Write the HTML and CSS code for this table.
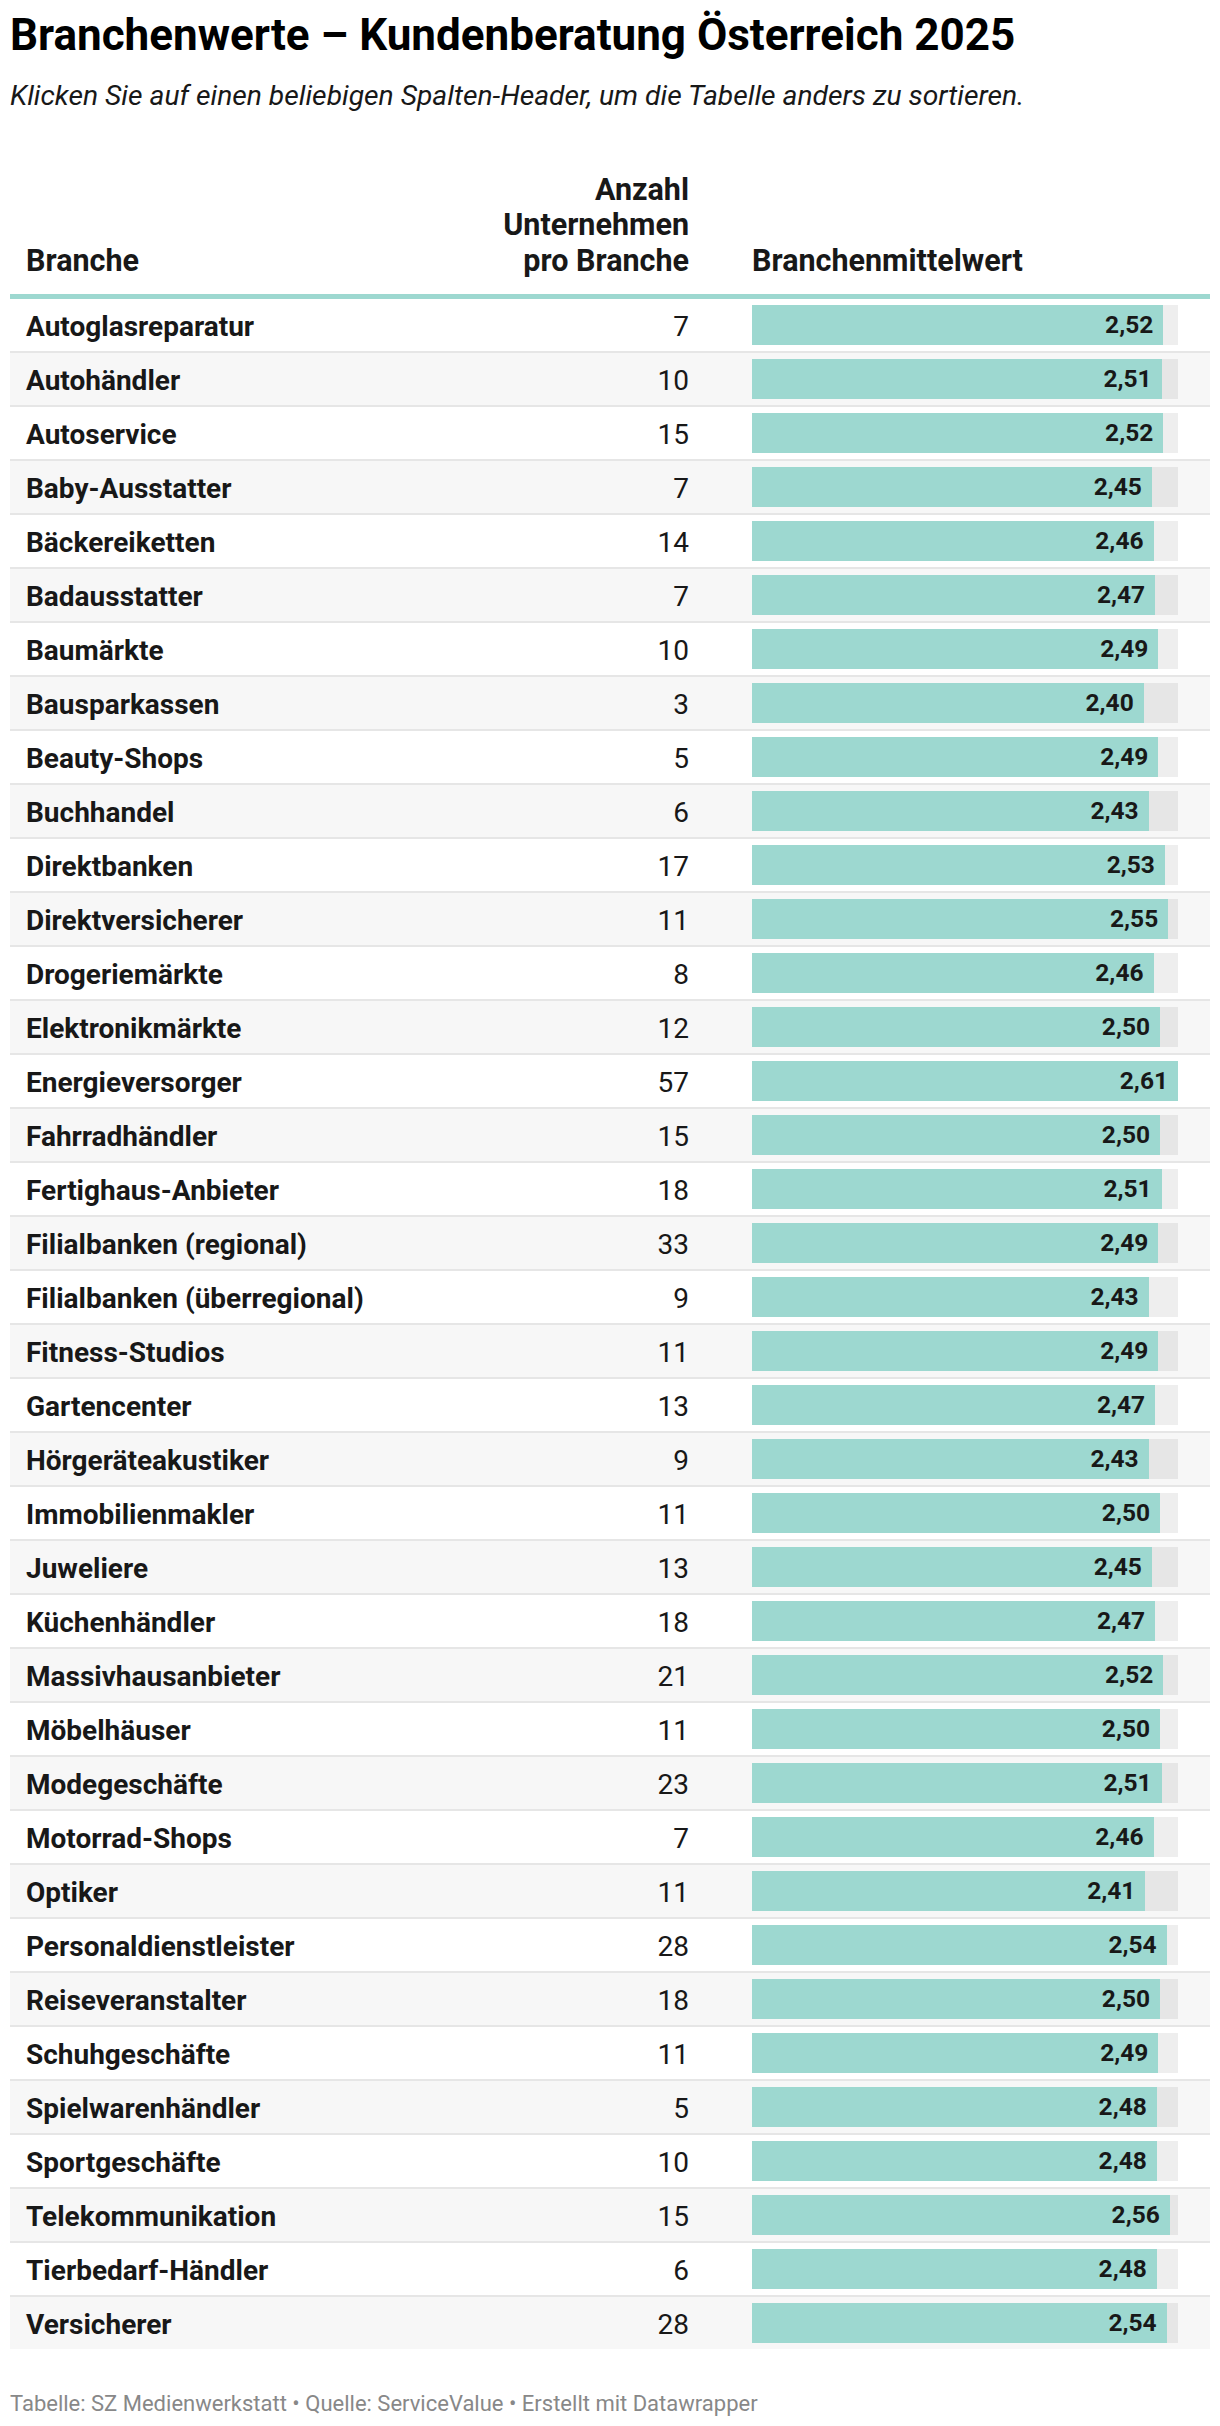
FILE: index.html
```html
<!DOCTYPE html>
<html lang="de">
<head>
<meta charset="utf-8">
<title>Branchenwerte – Kundenberatung Österreich 2025</title>
<link rel="stylesheet" href="styles.css">
</head>
<body>
<div class="chart">
  <h1 class="title">Branchenwerte – Kundenberatung Österreich 2025</h1>
  <p class="subtitle">Klicken Sie auf einen beliebigen Spalten-Header, um die Tabelle anders zu sortieren.</p>
  <table class="tbl">
    <colgroup>
      <col class="c-name">
      <col class="c-num">
      <col class="c-bar">
    </colgroup>
    <thead>
      <tr>
        <th class="h-name">Branche</th>
        <th class="h-num">Anzahl<br>Unternehmen<br>pro Branche</th>
        <th class="h-bar">Branchenmittelwert</th>
      </tr>
    </thead>
    <tbody>
      <tr><td class="name">Autoglasreparatur</td><td class="num">7</td><td class="barcell"><div class="track"><div class="bar" style="width:96.55%"><span class="val">2,52</span></div></div></td></tr>
      <tr><td class="name">Autohändler</td><td class="num">10</td><td class="barcell"><div class="track"><div class="bar" style="width:96.17%"><span class="val">2,51</span></div></div></td></tr>
      <tr><td class="name">Autoservice</td><td class="num">15</td><td class="barcell"><div class="track"><div class="bar" style="width:96.55%"><span class="val">2,52</span></div></div></td></tr>
      <tr><td class="name">Baby-Ausstatter</td><td class="num">7</td><td class="barcell"><div class="track"><div class="bar" style="width:93.87%"><span class="val">2,45</span></div></div></td></tr>
      <tr><td class="name">Bäckereiketten</td><td class="num">14</td><td class="barcell"><div class="track"><div class="bar" style="width:94.25%"><span class="val">2,46</span></div></div></td></tr>
      <tr><td class="name">Badausstatter</td><td class="num">7</td><td class="barcell"><div class="track"><div class="bar" style="width:94.64%"><span class="val">2,47</span></div></div></td></tr>
      <tr><td class="name">Baumärkte</td><td class="num">10</td><td class="barcell"><div class="track"><div class="bar" style="width:95.40%"><span class="val">2,49</span></div></div></td></tr>
      <tr><td class="name">Bausparkassen</td><td class="num">3</td><td class="barcell"><div class="track"><div class="bar" style="width:91.95%"><span class="val">2,40</span></div></div></td></tr>
      <tr><td class="name">Beauty-Shops</td><td class="num">5</td><td class="barcell"><div class="track"><div class="bar" style="width:95.40%"><span class="val">2,49</span></div></div></td></tr>
      <tr><td class="name">Buchhandel</td><td class="num">6</td><td class="barcell"><div class="track"><div class="bar" style="width:93.10%"><span class="val">2,43</span></div></div></td></tr>
      <tr><td class="name">Direktbanken</td><td class="num">17</td><td class="barcell"><div class="track"><div class="bar" style="width:96.93%"><span class="val">2,53</span></div></div></td></tr>
      <tr><td class="name">Direktversicherer</td><td class="num">11</td><td class="barcell"><div class="track"><div class="bar" style="width:97.70%"><span class="val">2,55</span></div></div></td></tr>
      <tr><td class="name">Drogeriemärkte</td><td class="num">8</td><td class="barcell"><div class="track"><div class="bar" style="width:94.25%"><span class="val">2,46</span></div></div></td></tr>
      <tr><td class="name">Elektronikmärkte</td><td class="num">12</td><td class="barcell"><div class="track"><div class="bar" style="width:95.79%"><span class="val">2,50</span></div></div></td></tr>
      <tr><td class="name">Energieversorger</td><td class="num">57</td><td class="barcell"><div class="track"><div class="bar" style="width:100%"><span class="val">2,61</span></div></div></td></tr>
      <tr><td class="name">Fahrradhändler</td><td class="num">15</td><td class="barcell"><div class="track"><div class="bar" style="width:95.79%"><span class="val">2,50</span></div></div></td></tr>
      <tr><td class="name">Fertighaus-Anbieter</td><td class="num">18</td><td class="barcell"><div class="track"><div class="bar" style="width:96.17%"><span class="val">2,51</span></div></div></td></tr>
      <tr><td class="name">Filialbanken (regional)</td><td class="num">33</td><td class="barcell"><div class="track"><div class="bar" style="width:95.40%"><span class="val">2,49</span></div></div></td></tr>
      <tr><td class="name">Filialbanken (überregional)</td><td class="num">9</td><td class="barcell"><div class="track"><div class="bar" style="width:93.10%"><span class="val">2,43</span></div></div></td></tr>
      <tr><td class="name">Fitness-Studios</td><td class="num">11</td><td class="barcell"><div class="track"><div class="bar" style="width:95.40%"><span class="val">2,49</span></div></div></td></tr>
      <tr><td class="name">Gartencenter</td><td class="num">13</td><td class="barcell"><div class="track"><div class="bar" style="width:94.64%"><span class="val">2,47</span></div></div></td></tr>
      <tr><td class="name">Hörgeräteakustiker</td><td class="num">9</td><td class="barcell"><div class="track"><div class="bar" style="width:93.10%"><span class="val">2,43</span></div></div></td></tr>
      <tr><td class="name">Immobilienmakler</td><td class="num">11</td><td class="barcell"><div class="track"><div class="bar" style="width:95.79%"><span class="val">2,50</span></div></div></td></tr>
      <tr><td class="name">Juweliere</td><td class="num">13</td><td class="barcell"><div class="track"><div class="bar" style="width:93.87%"><span class="val">2,45</span></div></div></td></tr>
      <tr><td class="name">Küchenhändler</td><td class="num">18</td><td class="barcell"><div class="track"><div class="bar" style="width:94.64%"><span class="val">2,47</span></div></div></td></tr>
      <tr><td class="name">Massivhausanbieter</td><td class="num">21</td><td class="barcell"><div class="track"><div class="bar" style="width:96.55%"><span class="val">2,52</span></div></div></td></tr>
      <tr><td class="name">Möbelhäuser</td><td class="num">11</td><td class="barcell"><div class="track"><div class="bar" style="width:95.79%"><span class="val">2,50</span></div></div></td></tr>
      <tr><td class="name">Modegeschäfte</td><td class="num">23</td><td class="barcell"><div class="track"><div class="bar" style="width:96.17%"><span class="val">2,51</span></div></div></td></tr>
      <tr><td class="name">Motorrad-Shops</td><td class="num">7</td><td class="barcell"><div class="track"><div class="bar" style="width:94.25%"><span class="val">2,46</span></div></div></td></tr>
      <tr><td class="name">Optiker</td><td class="num">11</td><td class="barcell"><div class="track"><div class="bar" style="width:92.34%"><span class="val">2,41</span></div></div></td></tr>
      <tr><td class="name">Personaldienstleister</td><td class="num">28</td><td class="barcell"><div class="track"><div class="bar" style="width:97.32%"><span class="val">2,54</span></div></div></td></tr>
      <tr><td class="name">Reiseveranstalter</td><td class="num">18</td><td class="barcell"><div class="track"><div class="bar" style="width:95.79%"><span class="val">2,50</span></div></div></td></tr>
      <tr><td class="name">Schuhgeschäfte</td><td class="num">11</td><td class="barcell"><div class="track"><div class="bar" style="width:95.40%"><span class="val">2,49</span></div></div></td></tr>
      <tr><td class="name">Spielwarenhändler</td><td class="num">5</td><td class="barcell"><div class="track"><div class="bar" style="width:95.02%"><span class="val">2,48</span></div></div></td></tr>
      <tr><td class="name">Sportgeschäfte</td><td class="num">10</td><td class="barcell"><div class="track"><div class="bar" style="width:95.02%"><span class="val">2,48</span></div></div></td></tr>
      <tr><td class="name">Telekommunikation</td><td class="num">15</td><td class="barcell"><div class="track"><div class="bar" style="width:98.08%"><span class="val">2,56</span></div></div></td></tr>
      <tr><td class="name">Tierbedarf-Händler</td><td class="num">6</td><td class="barcell"><div class="track"><div class="bar" style="width:95.02%"><span class="val">2,48</span></div></div></td></tr>
      <tr><td class="name">Versicherer</td><td class="num">28</td><td class="barcell"><div class="track"><div class="bar" style="width:97.32%"><span class="val">2,54</span></div></div></td></tr>
    </tbody>
  </table>
  <p class="footer">Tabelle: SZ Medienwerkstatt • Quelle: ServiceValue • Erstellt mit Datawrapper</p>
</div>
</body>
</html>
```

FILE: styles.css
```css
html, body {
  margin: 0;
  padding: 0;
  background: #ffffff;
}

body {
  font-family: Roboto, "Liberation Sans", Arial, sans-serif;
  color: #181818;
}

.chart {
  padding: 0 10px;
}

.title {
  margin: 9px 0 0 0;
  font-size: 44px;
  line-height: 1.2;
  font-weight: 700;
  color: #000000;
}

.subtitle {
  margin: 16px 0 0 0;
  font-size: 28.25px;
  line-height: 1.3;
  font-style: italic;
  font-weight: 400;
  color: #181818;
}

.tbl {
  margin-top: 49px;
  width: 1200px;
  border-collapse: collapse;
  table-layout: fixed;
}

.c-name { width: 460px; }
.c-num { width: 235px; }
.c-bar { width: 505px; }

.tbl th {
  font-size: 30.5px;
  line-height: 35.5px;
  font-weight: 700;
  color: #181818;
  vertical-align: bottom;
  padding: 8px 0 16px 0;
  border-bottom: 5px solid #9dd8d0;
}

.h-name {
  text-align: left;
  padding-left: 16px !important;
}

.h-num {
  text-align: right;
  padding-right: 16px !important;
}

.h-bar {
  text-align: left;
  padding-left: 47px !important;
}

.tbl tbody tr {
  border-bottom: 2px solid #e6e6e6;
}

.tbl tbody tr:last-child {
  border-bottom: none;
}

.tbl tbody tr:nth-child(even) {
  background: #f7f7f7;
}

.tbl td {
  padding: 4px 0 0 0;
  vertical-align: middle;
  font-size: 28px;
  line-height: 30px;
}

.name {
  padding-left: 16px !important;
  font-weight: 700;
}

.num {
  text-align: right;
  padding-right: 16px !important;
  font-weight: 400;
}

.tbl td.barcell {
  padding: 6px 32px 6px 47px;
}

.track {
  height: 40px;
  background: rgba(0, 0, 0, 0.065);
  display: flex;
}

.bar {
  height: 40px;
  background: #9dd8d0;
  display: flex;
  align-items: center;
  justify-content: flex-end;
  box-sizing: border-box;
  padding-right: 10px;
}

.val {
  font-size: 24.5px;
  font-weight: 700;
  color: #181818;
  line-height: 1;
}

.footer {
  margin: 42px 0 0 0;
  font-size: 22px;
  line-height: 1.2;
  color: #888888;
}
```
